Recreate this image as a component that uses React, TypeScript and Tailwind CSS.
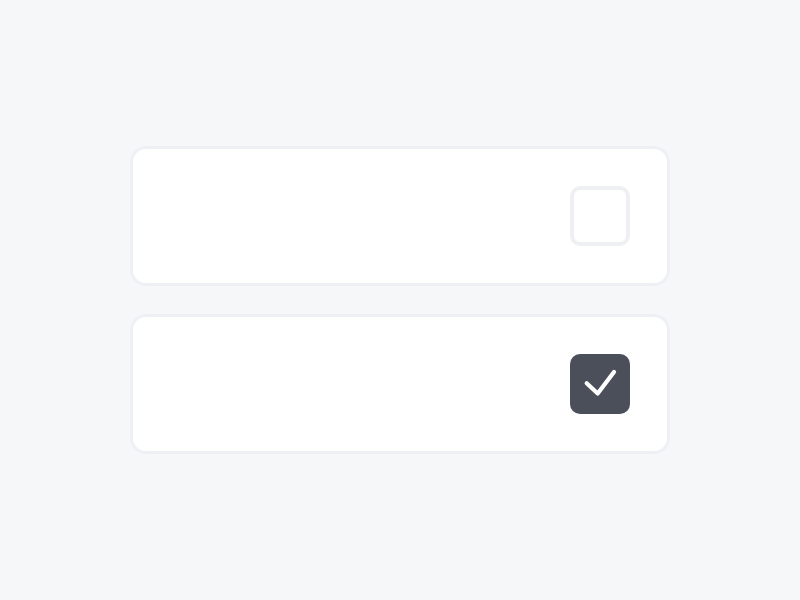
import React from "react";

function Card({ checked }: { checked: boolean }) {
  return (
    <div className="w-[540px] h-[140px] bg-white border-[3px] border-[#eff0f4] rounded-[16px] flex items-center justify-end pr-[37px]">
      {checked ? (
        <div className="w-[60px] h-[60px] rounded-[10px] bg-[#4b4f5a] flex items-center justify-center">
          <svg width="60" height="60" viewBox="0 0 60 60" fill="none">
            <path d="M16.7 29.3 L27.7 39.5 L44 18" stroke="white" strokeWidth="4.2" strokeLinecap="round" strokeLinejoin="round" />
          </svg>
        </div>
      ) : (
        <div className="w-[60px] h-[60px] rounded-[10px] border-[4px] border-[#eff0f4] bg-white" />
      )}
    </div>
  );
}

export default function App() {
  return (
    <div className="w-[800px] h-[600px] bg-[#f6f7f9] flex flex-col items-center justify-center gap-[28px]" style={{ fontFamily: "Inter, sans-serif" }}>
      <Card checked={false} />
      <Card checked={true} />
    </div>
  );
}
